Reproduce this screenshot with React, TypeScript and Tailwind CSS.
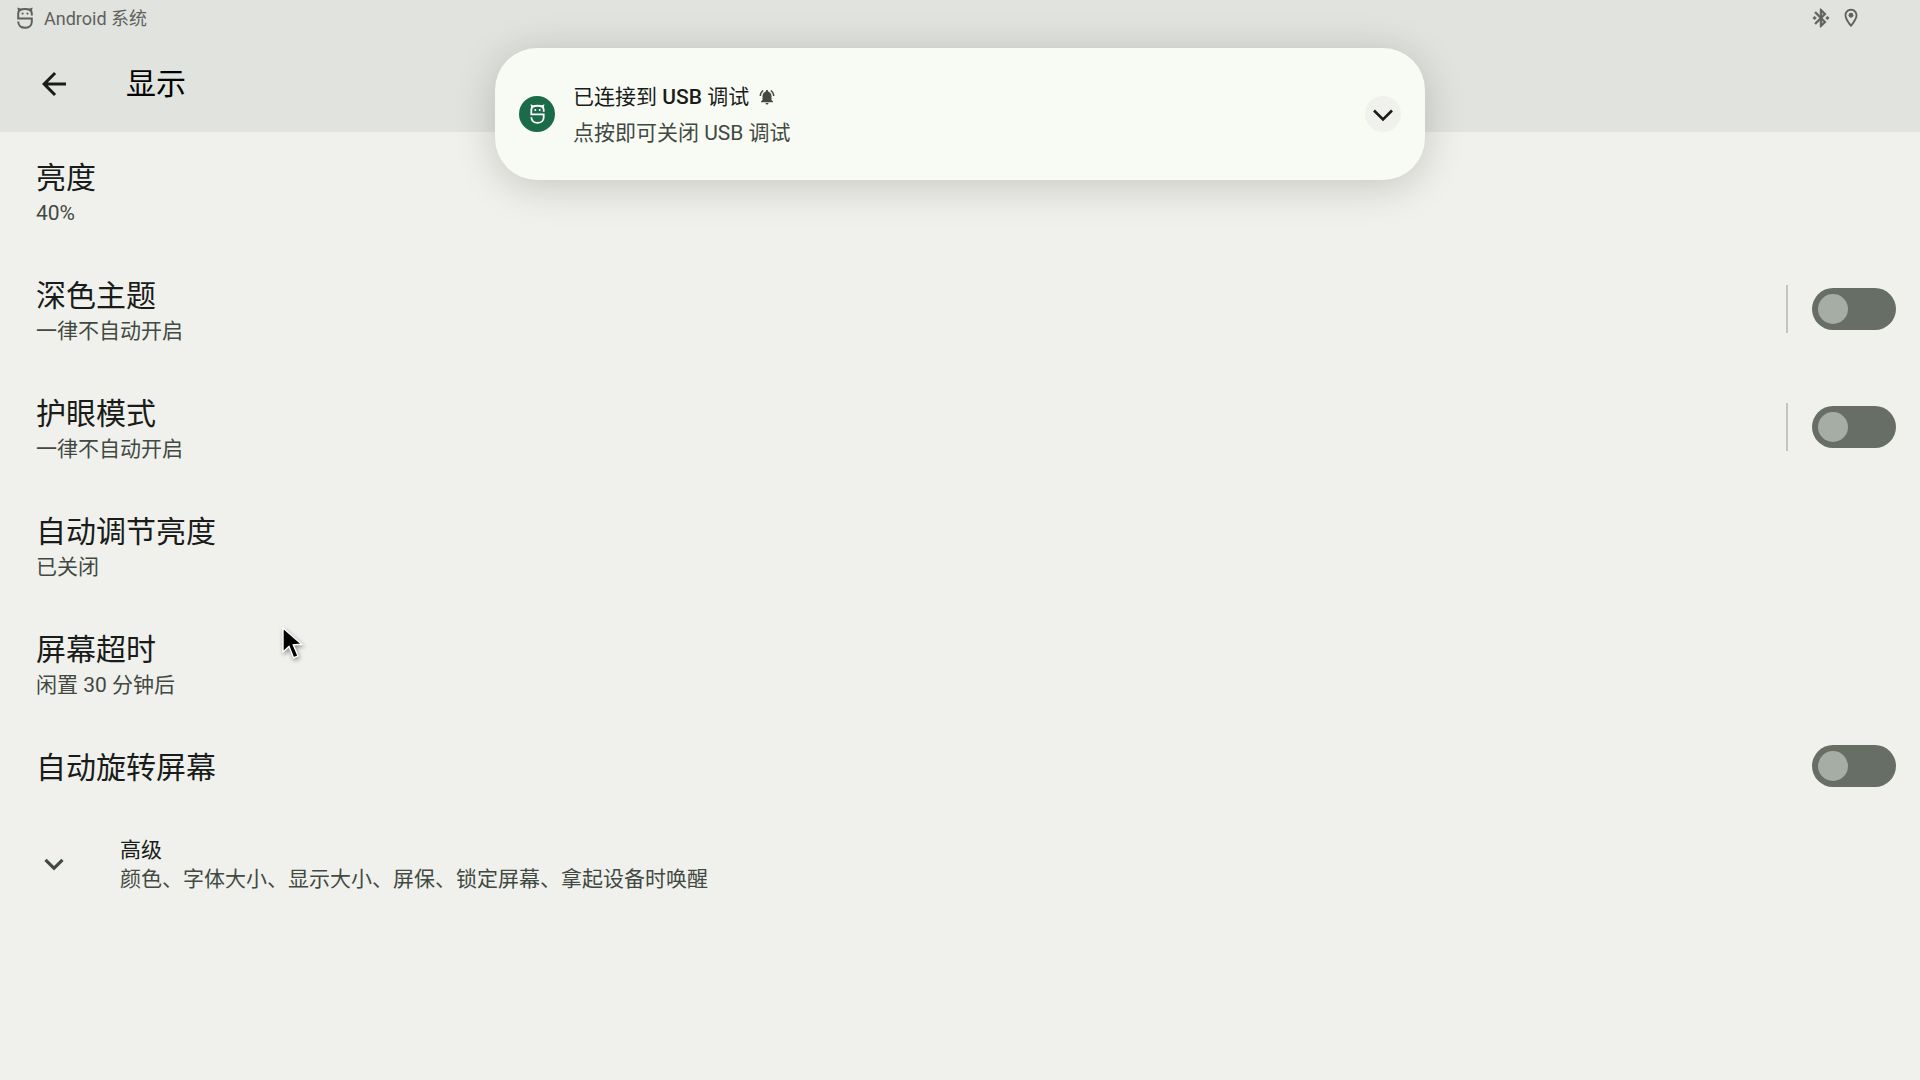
import { useState } from "react";

interface SettingItem {
  title: string;
  summary?: string;
  toggle?: boolean;
  divider?: boolean;
}

const items: SettingItem[] = [
  { title: "亮度", summary: "40%" },
  { title: "深色主题", summary: "一律不自动开启", toggle: true, divider: true },
  { title: "护眼模式", summary: "一律不自动开启", toggle: true, divider: true },
  { title: "自动调节亮度", summary: "已关闭" },
  { title: "屏幕超时", summary: "闲置 30 分钟后" },
  { title: "自动旋转屏幕", toggle: true },
];

const SystemLogo = ({ className }: { className?: string }) => (
  <svg viewBox="0 0 16 22" fill="none" stroke="currentColor" strokeWidth="2" className={className} aria-hidden="true">
    <path d="M14.8 8.6V6.4c0-3-2.2-4.5-6.8-4.5S1.2 3.4 1.2 6.4v5h13.6v3.4c0 3.6-3 6-6.8 6s-6.8-2.4-6.8-6.2" />
    <path d="M.4.4 4.2 1.8 1.2 5zM15.6.4l-3.8 1.4 3 3.2z" fill="currentColor" stroke="none" />
    <circle cx="5.6" cy="6.6" r="1.1" fill="currentColor" stroke="none" />
    <circle cx="10.4" cy="6.6" r="1.1" fill="currentColor" stroke="none" />
  </svg>
);

const ChevronDown = ({ className }: { className?: string }) => (
  <svg viewBox="0 0 24 24" fill="currentColor" className={className} aria-hidden="true">
    <path d="M7.1 7.8 12 12.7l4.9-4.9 1.5 1.5L12 15.7 5.6 9.3z" />
  </svg>
);

const Switch = ({ label }: { label: string }) => {
  const [checked, setChecked] = useState(false);
  return (
    <label className="relative flex h-[42px] w-[84px] shrink-0 cursor-pointer items-center rounded-full bg-[#676e66] px-1.5 has-checked:bg-[#1b6b48]">
      <input
        type="checkbox"
        role="switch"
        aria-label={label}
        checked={checked}
        onChange={(e) => setChecked(e.target.checked)}
        className="peer absolute inset-0 cursor-pointer opacity-0"
      />
      <span className="h-[30px] w-[30px] rounded-full bg-[#a6ada5] peer-checked:ml-auto peer-checked:bg-white" />
    </label>
  );
};

const StatusBar = () => (
  <div className="flex h-9 items-center justify-between pl-4 pr-[58px] text-[#5f615e]">
    <div className="flex items-center gap-2.5 text-lg leading-6">
      <SystemLogo className="h-[22px] w-[18px]" />
      <span className="pt-0.5">Android 系统</span>
    </div>
    <div className="flex items-center gap-2">
      <svg viewBox="0 0 24 24" fill="currentColor" stroke="currentColor" strokeWidth="0.6" className="h-[22px] w-[22px]" aria-hidden="true">
        <path d="M7 12l-2-2-2 2 2 2 2-2zm10.71-4.29L12 2h-1v7.59L6.41 5 5 6.41 10.59 12 5 17.59 6.41 19 11 14.41V22h1l5.71-5.71-4.3-4.29 4.3-4.29zM13 5.83l1.88 1.88L13 9.59V5.83zm1.88 10.46L13 18.17v-3.76l1.88 1.88zM19 10l-2 2 2 2 2-2-2-2z" />
      </svg>
      <svg viewBox="0 0 24 24" fill="currentColor" className="h-[22px] w-[22px]" aria-hidden="true">
        <path d="M12 2C8.13 2 5 5.13 5 9c0 5.25 7 13 7 13s7-7.75 7-13c0-3.87-3.13-7-7-7zM7 9c0-2.76 2.24-5 5-5s5 2.24 5 5c0 2.88-2.88 7.19-5 9.88C9.92 16.21 7 11.85 7 9z" />
        <circle cx="12" cy="9" r="2.6" />
      </svg>
    </div>
  </div>
);

const Notification = () => (
  <section className="absolute left-1/2 top-12 flex w-[930px] max-w-full -translate-x-1/2 items-center rounded-[42px] bg-[#f8fbf4] px-6 py-[29px] shadow-[0_6px_42px_rgba(0,0,0,0.18)]">
    <span className="flex h-9 w-9 shrink-0 items-center justify-center rounded-full bg-[#1b6b48] text-white">
      <SystemLogo className="h-5 w-[15px]" />
    </span>
    <div className="ml-[18px] flex-1 pt-0.5 text-[21px] leading-9">
      <h2 className="flex items-center gap-[9px] text-[#191c1a]">
        <span>
          已连接到 <span className="font-medium">USB</span> 调试
        </span>
        <svg viewBox="0 0 24 24" fill="currentColor" className="h-[18px] w-[18px] text-[#414942]" aria-hidden="true">
          <path d="M7.58 4.08 6.15 2.65C3.75 4.48 2.17 7.3 2.03 10.5h2c.15-2.65 1.51-4.97 3.55-6.42zm12.39 6.42h2c-.15-3.2-1.73-6.02-4.12-7.85l-1.42 1.43c2.02 1.45 3.39 3.77 3.54 6.42zM18 11c0-3.07-1.64-5.64-4.5-6.32V4c0-.83-.67-1.5-1.5-1.5s-1.5.67-1.5 1.5v.68C7.63 5.36 6 7.92 6 11v5l-2 2v1h16v-1l-2-2v-5zm-6 11c1.1 0 2-.9 2-2h-4c0 1.1.9 2 2 2z" />
        </svg>
      </h2>
      <p className="text-[#414942]">点按即可关闭 USB 调试</p>
    </div>
    <button
      type="button"
      aria-label="展开"
      className="flex h-9 w-9 shrink-0 items-center justify-center rounded-full bg-[#f0f1ec] text-[#191c1a]"
    >
      <svg viewBox="0 0 24 24" fill="none" stroke="currentColor" strokeWidth="2.6" className="h-6 w-6" aria-hidden="true">
        <path d="m3 8.5 9 9 9-9" />
      </svg>
    </button>
  </section>
);

const SettingRow = ({ title, summary, toggle, divider }: SettingItem) => (
  <li className="flex items-center gap-6 py-[22px] pl-9 pr-6">
    <div className="flex-1 pt-1">
      <h2 className="text-3xl leading-10 text-[#191c1a]">{title}</h2>
      {summary && <p className="text-[21px] leading-[30px] text-[#414942]">{summary}</p>}
    </div>
    {divider && <span className="h-12 w-0.5 bg-[#c3c5c0]" />}
    {toggle && <Switch label={title} />}
  </li>
);

const App = () => {
  return (
    <div className="relative min-h-screen bg-[#f0f1ec] font-['Roboto','Noto_Sans_CJK_SC',sans-serif]">
      <header className="bg-[#e1e3de]">
        <StatusBar />
        <div className="flex h-24 items-center gap-[54px] px-9">
          <button type="button" aria-label="返回" className="text-[#191c1a]">
            <svg viewBox="0 0 24 24" fill="currentColor" className="h-9 w-9" aria-hidden="true">
              <path d="M20 11H7.83l5.59-5.59L12 4l-8 8 8 8 1.41-1.41L7.83 13H20z" />
            </svg>
          </button>
          <h1 className="text-3xl leading-10 text-black">显示</h1>
        </div>
      </header>

      <main>
        <ul>
          {items.map((item) => (
            <SettingRow key={item.title} {...item} />
          ))}
        </ul>
        <button type="button" className="flex w-full items-center gap-12 px-9 py-[26px] text-left text-[21px] leading-[29px]">
          <ChevronDown className="h-9 w-9 text-[#414942]" />
          <span className="flex flex-col">
            <span className="text-[#191c1a]">高级</span>
            <span className="text-[#414942]">颜色、字体大小、显示大小、屏保、锁定屏幕、拿起设备时唤醒</span>
          </span>
        </button>
      </main>

      <Notification />

      {/* Mouse pointer */}
      <svg
        viewBox="0 0 24 36"
        className="pointer-events-none absolute left-[281px] top-[625px] h-9 w-6 drop-shadow-[1px_2px_2px_rgba(0,0,0,0.4)]"
        aria-hidden="true"
      >
        <path d="M2 3v24l6-5.5 4.5 11.3 4.5-2-4.7-11 8.4-.5z" fill="#000" stroke="#fff" strokeWidth="1.4" />
      </svg>
    </div>
  );
};

export default App;
